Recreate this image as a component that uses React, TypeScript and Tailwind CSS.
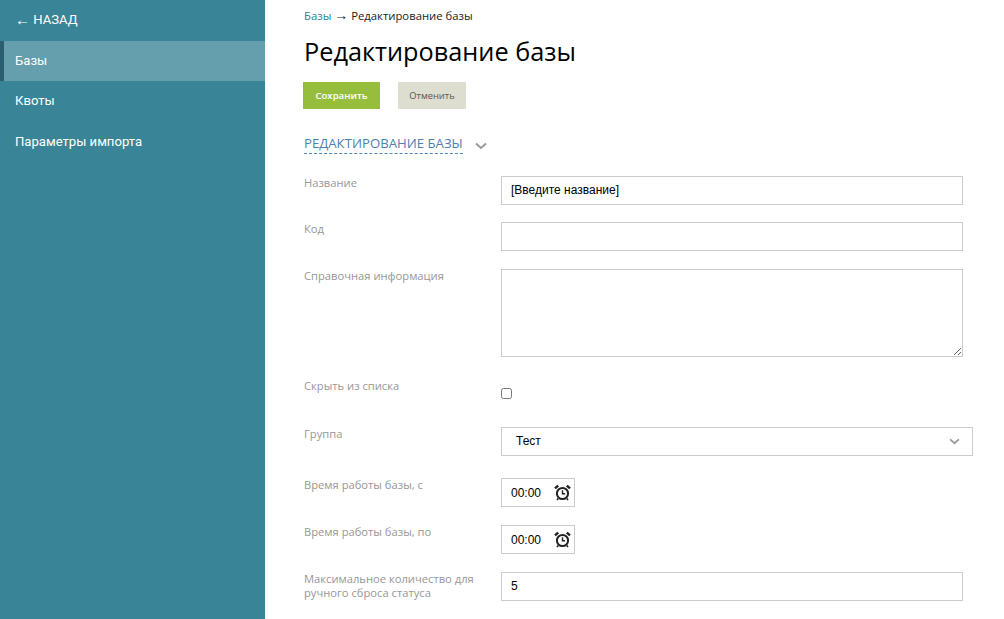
import React from "react";

const labelCls = "w-[198px] shrink-0 pl-px text-[11.2px] leading-[14px] text-[#979797] font-['Open_Sans',sans-serif]";
const inputCls = "h-[29px] border border-[#cccccc] bg-white px-[9px] pb-[1px] text-[12px] text-black outline-none font-['Liberation_Sans',Arial,sans-serif]";

function AlarmIcon() {
  return (
    <svg width="17" height="17" viewBox="0 0 17 17" fill="none" stroke="#222" className="shrink-0">
      <circle cx="8.5" cy="9.5" r="5.6" strokeWidth="2" />
      <path d="M8.5 6.2v3.5h2.6" strokeWidth="1.4" />
      <path d="M1 4.4 4.2 1.6M16 4.4 12.8 1.6" strokeWidth="2.4" />
      <path d="M4.2 14.4 3 16M12.8 14.4 14 16" strokeWidth="1.6" />
    </svg>
  );
}

function TimeField({ value }: { value: string }) {
  return (
    <div className="flex h-[29px] w-[74px] items-center justify-between border border-[#cccccc] bg-white pl-[9px] pr-[3px] text-[12px] text-black font-['Liberation_Sans',Arial,sans-serif]">
      <span>{value}</span>
      <AlarmIcon />
    </div>
  );
}

function Row({ label, className, children }: { label: React.ReactNode; className?: string; children: React.ReactNode }) {
  return (
    <div className={`flex items-start ${className ?? ""}`}>
      <div className={labelCls}>{label}</div>
      {children}
    </div>
  );
}

export default function App() {
  return (
    <div className="flex h-[619px] w-[1004px] overflow-hidden bg-white">
      {/* Sidebar */}
      <aside className="w-[265px] shrink-0 bg-[#398597] text-[13.1px] text-white font-['Roboto',sans-serif]">
        <div className="flex h-[41px] items-center pb-[2px] pl-[15px]">
          <span className="font-['Liberation_Sans',sans-serif] text-[15px] leading-[15px]">←</span>&nbsp;НАЗАД
        </div>
        <div className="flex h-[40px] items-center border-l-4 border-[#2a5f6e] bg-[#659eac] pb-[1px] pl-[11px]">Базы</div>
        <div className="flex h-[40px] items-center pb-[1px] pl-[15px]">Квоты</div>
        <div className="flex h-[41px] items-center pl-[15px]">Параметры импорта</div>
      </aside>

      {/* Main */}
      <main className="flex-1 pl-[38px] font-['Open_Sans',sans-serif]">
        <div className="h-[23px] pl-px pt-[8px] text-[11.3px] leading-[14px] text-[#222]">
          <span className="text-[#2f7f96]">Базы</span>{" "}
          <span className="font-['Liberation_Sans',sans-serif] text-[14px] leading-[14px]">→</span> Редактирование базы
        </div>
        <h1 className="mt-[11px] pl-px text-[25.3px] leading-[34px] font-normal text-black">Редактирование базы</h1>

        <div className="mt-[14px] flex gap-[18px]">
          <button className="h-[27px] w-[77px] bg-[#97bd3d] pt-px text-[9.6px] font-semibold text-white">Сохранить</button>
          <button className="h-[27px] w-[68px] bg-[#deded0] text-[9.3px] text-[#555]">Отменить</button>
        </div>

        <div className="mt-[26px] flex items-center pl-px">
          <span className="border-b border-dashed border-[#4f86b5] pb-px text-[13.2px] leading-[17px] text-[#4f7fae]">РЕДАКТИРОВАНИЕ БАЗЫ</span>
          <svg width="12" height="8" viewBox="0 0 12 8" fill="none" stroke="#999" strokeWidth="2" className="ml-[12px] mt-[2px]">
            <path d="M1 1.5 6 6l5-4.5" />
          </svg>
        </div>

        <div className="mt-[22px]">
          <Row label="Название" className="mb-[17px]">
            <input readOnly value="[Введите название]" className={`${inputCls} w-[462px]`} />
          </Row>
          <Row label="Код" className="mb-[18px]">
            <input readOnly value="" className={`${inputCls} w-[462px]`} />
          </Row>
          <Row label="Справочная информация" className="mb-[22px]">
            <textarea readOnly value="" className={`${inputCls} block h-[88px] w-[462px]`} />
          </Row>
          <Row label="Скрыть из списка" className="mb-[28px]">
            <input type="checkbox" className="mt-[9px] h-[11px] w-[11px]" />
          </Row>
          <Row label="Группа" className="mb-[22px]">
            <div className="flex h-[29px] w-[472px] items-center justify-between border border-[#cccccc] bg-white pb-[1px] pl-[14px] pr-[12px] text-[12px] text-black font-['Liberation_Sans',Arial,sans-serif]">
              <span>Тест</span>
              <svg width="11" height="7" viewBox="0 0 12 8" fill="none" stroke="#999" strokeWidth="2">
                <path d="M1 1.5 6 6l5-4.5" />
              </svg>
            </div>
          </Row>
          <Row label="Время работы базы, с" className="mb-[18px]">
            <TimeField value="00:00" />
          </Row>
          <Row label="Время работы базы, по" className="mb-[18px]">
            <TimeField value="00:00" />
          </Row>
          <Row label={<>Максимальное количество для<br />ручного сброса статуса</>}>
            <input readOnly value="5" className={`${inputCls} w-[462px]`} />
          </Row>
        </div>
      </main>
    </div>
  );
}
